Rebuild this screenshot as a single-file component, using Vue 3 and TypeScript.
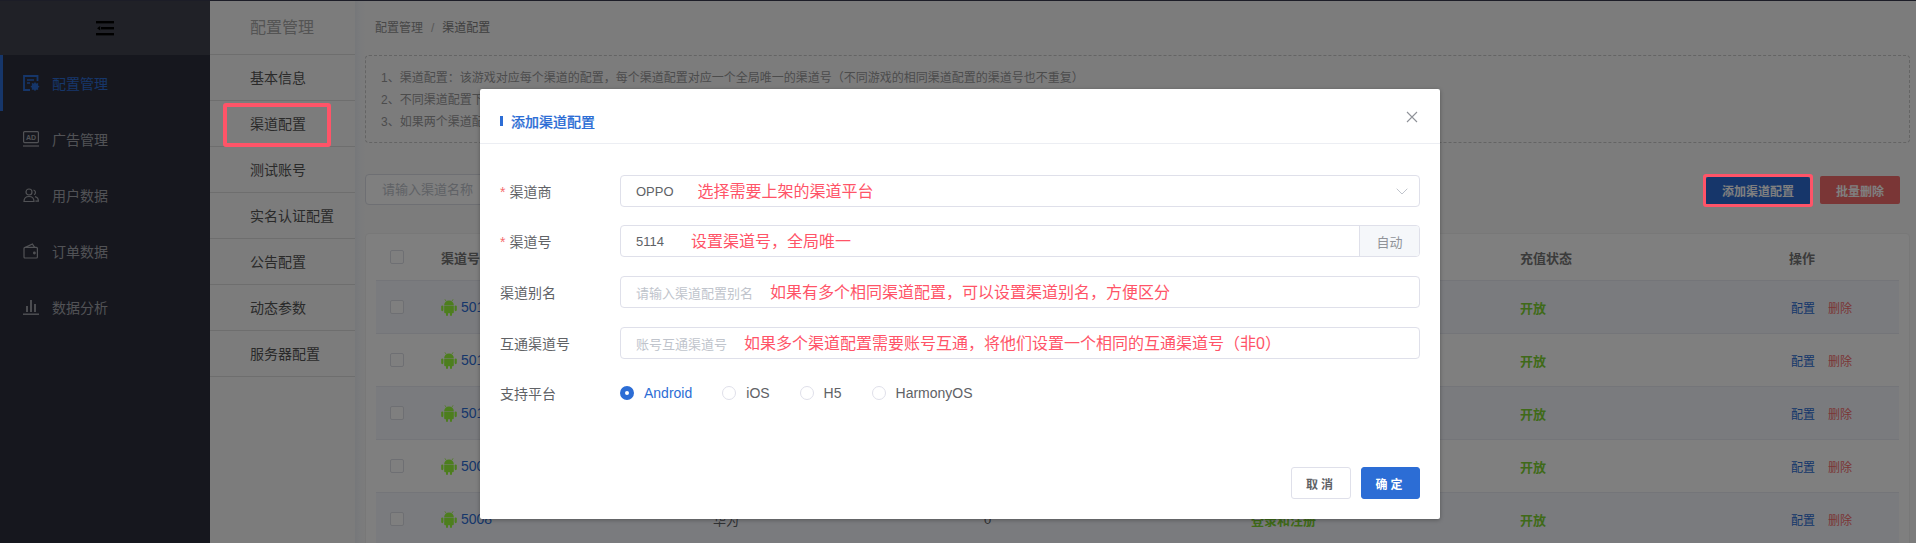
<script setup lang="ts">
const menu = ['配置管理', '广告管理', '用户数据', '订单数据', '数据分析']
const tabs = ['基本信息', '渠道配置', '测试账号', '实名认证配置', '公告配置', '动态参数', '服务器配置']
const rows = ['5013', '5012', '5011', '5009', '5008']
const platforms = ['Android', 'iOS', 'H5', 'HarmonyOS']
</script>

<template>
  <div class="root">
    <div class="strip"></div>
    <div class="page">
      <aside class="side">
        <div class="side-head">
          <svg width="18" height="15" viewBox="0 0 18 15" fill="#000">
            <rect x="0" y="0" width="18" height="2.4" />
            <rect x="5" y="6" width="13" height="2.4" />
            <path d="M1 7.2 4.2 5v4.4z" />
            <rect x="0" y="12" width="18" height="2.4" />
          </svg>
        </div>
        <div v-for="(m, i) in menu" :key="m" class="menu-item" :class="{ active: i === 0 }">
          <svg class="menu-icon" width="16" height="16" viewBox="0 0 16 16" fill="none" stroke="currentColor" stroke-width="1.2">
            <template v-if="i === 0">
              <path d="M14.5 6V1H1v14h6" stroke-width="1.8" />
              <path d="M4 5h7M4 8h3" stroke-width="1.4" />
              <circle cx="12" cy="11.6" r="3.4" fill="currentColor" stroke="none" />
              <path d="M12 7.4v8.4M7.8 11.6h8.4M9 8.6l6 6M15 8.6l-6 6" stroke-width="1.4" />
            </template>
            <template v-else-if="i === 1">
              <rect x="0.6" y="0.6" width="14.8" height="11" rx="1" />
              <path d="M0 15h16" />
              <text x="8" y="9" text-anchor="middle" class="ad-text">AD</text>
            </template>
            <template v-else-if="i === 2">
              <circle cx="6" cy="5" r="3" />
              <path d="M1 14.5c0-3.2 2.2-5 5-5s5 1.8 5 5z" />
              <path d="M10.5 3a2.6 2.6 0 0 1 .6 4.8M12 9.6c2 .5 3.4 2 3.4 4.6h-3" />
            </template>
            <template v-else-if="i === 3">
              <rect x="1" y="4.4" width="13.4" height="10.6" rx="1" />
              <path d="M2.4 4.4 9.4 1l2.2 3.4" />
              <circle cx="11.4" cy="10" r=".8" fill="currentColor" />
            </template>
            <template v-else>
              <path d="M0 15.2h16" stroke-width="1.4" />
              <path d="M4 7v6M8 1v12M12 5v8" stroke-width="1.8" />
            </template>
          </svg>
          <span>{{ m }}</span>
        </div>
      </aside>

      <nav class="tabs">
        <div class="tabs-title">配置管理</div>
        <div v-for="t in tabs" :key="t" class="tab">{{ t }}</div>
      </nav>

      <main class="main">
        <div class="crumb">配置管理<span class="slash">/</span><span class="crumb-cur">渠道配置</span></div>
        <div class="notice">
          <p>1、渠道配置：该游戏对应每个渠道的配置，每个渠道配置对应一个全局唯一的渠道号（不同游戏的相同渠道配置的渠道号也不重复）</p>
          <p>2、不同渠道配置下</p>
          <p>3、如果两个渠道配</p>
        </div>
        <div class="toolbar">
          <div class="search">请输入渠道名称</div>
          <div class="actions">
            <button class="btn-add">添加渠道配置</button>
            <button class="btn-del">批量删除</button>
          </div>
        </div>
        <div class="card">
          <div class="grid head">
            <span class="check"></span>
            <span>渠道号</span>
            <span></span>
            <span></span>
            <span></span>
            <span>充值状态</span>
            <span>操作</span>
          </div>
          <div v-for="r in rows" :key="r" class="grid row">
            <span class="check"></span>
            <span class="id">
              <svg width="16" height="17" viewBox="0 0 16 17" fill="#9afc3c">
                <path d="M3.2 6a4.8 4.6 0 0 1 9.6 0z" />
                <path d="M5 2 3.9 .3M11 2l1.1-1.7" stroke="#9afc3c" stroke-width=".8" />
                <path d="M3.2 6.4h9.6v6.8a1 1 0 0 1-1 1H11V16a1 1 0 0 1-2 0v-1.8H7V16a1 1 0 0 1-2 0v-1.8h-.8a1 1 0 0 1-1-1z" />
                <rect x="0.2" y="6.4" width="2.2" height="5.8" rx="1.1" />
                <rect x="13.6" y="6.4" width="2.2" height="5.8" rx="1.1" />
              </svg>
              {{ r }}
            </span>
            <span>华为</span>
            <span>0</span>
            <span class="green">登录和注册</span>
            <span class="green">开放</span>
            <span class="ops"><a class="op-cfg">配置</a><a class="op-del">删除</a></span>
          </div>
        </div>
      </main>
    </div>

    <div class="overlay"></div>
    <div class="mark mark-tab"></div>
    <div class="mark mark-add"></div>

    <section class="modal">
      <header class="modal-head">
        <i class="title-bar"></i>
        <h3>添加渠道配置</h3>
        <svg class="close" width="12" height="12" viewBox="0 0 12 12" stroke="#8f9299" stroke-width="1.1" fill="none">
          <path d="M1 1l10 10M11 1 1 11" />
        </svg>
      </header>
      <div class="form">
        <div class="f-row">
          <label class="f-label"><em>*</em>渠道商</label>
          <div class="field">
            <span class="val">OPPO</span>
            <span class="note n1">选择需要上架的渠道平台</span>
            <svg class="chev" width="12" height="7" viewBox="0 0 12 7" fill="none" stroke="#c0c4cc" stroke-width="1">
              <path d="M.7.7 6 6 11.3.7" />
            </svg>
          </div>
        </div>
        <div class="f-row">
          <label class="f-label"><em>*</em>渠道号</label>
          <div class="field">
            <span class="val">5114</span>
            <span class="note n2">设置渠道号，全局唯一</span>
            <span class="suffix">自动</span>
          </div>
        </div>
        <div class="f-row">
          <label class="f-label">渠道别名</label>
          <div class="field">
            <span class="ph">请输入渠道配置别名</span>
            <span class="note n3">如果有多个相同渠道配置，可以设置渠道别名，方便区分</span>
          </div>
        </div>
        <div class="f-row">
          <label class="f-label">互通渠道号</label>
          <div class="field">
            <span class="ph">账号互通渠道号</span>
            <span class="note n3">如果多个渠道配置需要账号互通，将他们设置一个相同的互通渠道号（非0）</span>
          </div>
        </div>
        <div class="f-row">
          <label class="f-label">支持平台</label>
          <div class="radios">
            <span v-for="(p, i) in platforms" :key="p" class="radio" :class="{ on: i === 0 }">
              <i class="dot"></i>{{ p }}
            </span>
          </div>
        </div>
      </div>
      <footer class="modal-foot">
        <button class="btn-cancel">取消</button>
        <button class="btn-ok">确定</button>
      </footer>
    </section>
  </div>
</template>

<style>
html, body { margin: 0; overflow: hidden; background: #1c1d27; }
</style>

<style scoped>
.root {
  position: relative;
  width: 1916px;
  height: 543px;
  overflow: hidden;
  font-family: "Liberation Sans", "Noto Sans CJK SC", sans-serif;
  font-size: 13px;
  color: #606266;
}
.strip { height: 1px; background: #1c1d27; }
.page { display: flex; height: 542px; background: #f8f8f9; }

.side { width: 210px; flex: none; background: #2d2f3c; color: #a3a5ac; }
.side-head { height: 54px; display: flex; align-items: center; justify-content: center; background: #41434e; }
.menu-item {
  height: 56px;
  display: flex;
  align-items: center;
  padding-left: 23px;
  gap: 13px;
  font-size: 14px;
  box-sizing: border-box;
}
.menu-item.active { color: #2c6dd5; box-shadow: inset 3px 0 0 #2c6dd5; }
.menu-icon { flex: none; overflow: visible; }
.ad-text { font: bold 7px "Liberation Sans", sans-serif; fill: currentColor; stroke: none; }

.tabs { width: 145px; flex: none; background: #f8f8f8; }
.tabs-title {
  height: 53px;
  line-height: 53px;
  padding-left: 40px;
  font-size: 16px;
  color: #a8a8a8;
  border-bottom: 1px solid #dcdcdc;
}
.tab {
  height: 45px;
  line-height: 47px;
  padding-left: 40px;
  font-size: 14px;
  color: #555;
  border-bottom: 1px solid #dcdcdc;
}

.main {
  flex: 1;
  min-width: 0;
  padding: 0 6px 0 10px;
  background: linear-gradient(90deg, #eceff4 0, #f4f6f9 5px, #f8f8f9 10px);
}
.crumb { height: 54px; line-height: 54px; padding-left: 10px; font-size: 12px; color: #909090; }
.slash { margin: 0 8px; color: #b0b0b0; }
.crumb-cur { color: #808080; }
.notice {
  height: 88px;
  box-sizing: border-box;
  padding: 11px 15px;
  border: 1px dashed #c8c8c8;
  border-radius: 4px;
  font-size: 12px;
  color: #999;
}
.notice p { margin: 0; line-height: 22px; }

.toolbar { display: flex; justify-content: space-between; margin-top: 31px; height: 31px; }
.search {
  width: 260px;
  height: 31px;
  box-sizing: border-box;
  line-height: 29px;
  padding-left: 16px;
  border: 1px solid #dcdfe6;
  border-radius: 4px;
  background: #fff;
  font-size: 13px;
  color: #c0c4cc;
}
.actions { display: flex; align-items: center; gap: 10px; padding-right: 10px; padding-top: 1px; }
.actions button {
  height: 28px;
  border: 0;
  border-radius: 2px;
  color: #fff;
  font: bold 12px "Liberation Sans", "Noto Sans CJK SC", sans-serif;
  padding: 0;
}
.btn-add { width: 104px; background: #2c6dd5; margin-top: 1px; }
.btn-del { width: 80px; background: #f56c6c; }

.card {
  margin-top: 28px;
  padding: 0 10px;
  border: 1px solid #f0f0f0;
  border-radius: 4px 4px 0 0;
  background: #fff;
  height: 320px;
  overflow: hidden;
}
.grid {
  display: grid;
  grid-template-columns: 65px 272px 271px 267px 269px 269px 1fr;
  align-items: center;
  height: 53px;
  font-size: 13px;
  border-bottom: 1px solid #e9ebf2;
  box-sizing: border-box;
}
.head { height: 47px; font-weight: bold; color: #777; }
.row:nth-child(even) { background: #f5f7fd; }
.check {
  width: 14px;
  height: 14px;
  margin-left: 14px;
  box-sizing: border-box;
  border: 1px solid #dcdfe6;
  background: #fff;
  border-radius: 2px;
}
.id { display: flex; align-items: center; gap: 4px; color: #2c6dd5; font-size: 14px; }
.green { color: #7fd432; font-weight: bold; }
.ops { display: flex; gap: 13px; font-size: 12px; padding-left: 2px; }
.op-cfg { color: #2c6dd5; }
.op-del { color: #f56c6c; }

.overlay {
  position: absolute;
  inset: 1px 0 0;
  background: rgba(0, 0, 0, .5);
}
.mark { position: absolute; box-sizing: border-box; border: 4px solid #ff5468; border-radius: 3px; }
.mark-tab { left: 223px; top: 103px; width: 108px; height: 44px; }
.mark-add { left: 1703px; top: 174px; width: 110px; height: 33px; border-width: 3px; }

.modal {
  position: absolute;
  left: 480px;
  top: 89px;
  width: 960px;
  height: 430px;
  display: flex;
  flex-direction: column;
  background: #fff;
  border-radius: 2px;
  box-shadow: 0 1px 4px rgba(0, 0, 0, .3);
}
.modal-head {
  position: relative;
  height: 44px;
  flex: none;
  display: flex;
  align-items: center;
  padding: 10px 20px 0;
  border-bottom: 1px solid #eceef3;
}
.title-bar { width: 3px; height: 10px; background: #2c6dd5; margin-right: 8px; }
.modal-head h3 { margin: 0; font-size: 14px; font-weight: 500; color: #2c6dd5; -webkit-text-stroke: .2px #2c6dd5; }
.close { position: absolute; right: 22px; top: 22px; }

.form { padding: 31px 20px 0; }
.f-row { display: flex; align-items: center; height: 32px; margin-bottom: 19px; }
.f-row:first-child { margin-bottom: 18px; }
.f-row:nth-child(4) { margin-bottom: 18px; }
.f-label { width: 120px; flex: none; font-size: 14px; color: #606266; }
.f-label em { font-style: normal; color: #f56c6c; margin-right: 4px; }
.field {
  position: relative;
  flex: 1;
  height: 32px;
  box-sizing: border-box;
  border: 1px solid #dfe0ea;
  border-radius: 4px;
  display: flex;
  align-items: center;
  padding-left: 15px;
  font-size: 13px;
}
.val { color: #606266; }
.ph { color: #c0c4cc; }
.note { font-size: 16px; color: #ff5468; white-space: nowrap; margin-bottom: 2px; }
.n1 { margin-left: 24px; }
.n2 { margin-left: 27px; }
.n3 { margin-left: 17px; }
.chev { position: absolute; right: 11px; top: 12px; }
.suffix {
  margin-left: auto;
  align-self: stretch;
  width: 59px;
  display: flex;
  align-items: center;
  justify-content: center;
  background: #f5f7fa;
  border-left: 1px solid #dfe0ea;
  border-radius: 0 3px 3px 0;
  color: #909399;
}
.radios { display: flex; gap: 30px; }
.radio { display: flex; align-items: center; gap: 10px; font-size: 14px; color: #606266; }
.dot {
  width: 14px;
  height: 14px;
  box-sizing: border-box;
  border: 1px solid #dfe0ea;
  border-radius: 50%;
}
.radio.on { color: #2c6dd5; }
.radio.on .dot { border: 5px solid #2c6dd5; background: #fff; }

.modal-foot {
  margin-top: auto;
  display: flex;
  justify-content: flex-end;
  gap: 10px;
  padding: 0 20px 20px;
}
.modal-foot button {
  height: 32px;
  border-radius: 3px;
  font: bold 12px "Liberation Sans", "Noto Sans CJK SC", sans-serif;
  letter-spacing: 3px;
  padding: 0;
}
.btn-cancel { width: 60px; background: #fff; border: 1px solid #dfe0ea; color: #606266; }
.btn-ok { width: 59px; background: #2c6dd5; border: 1px solid #2c6dd5; color: #fff; }
</style>
